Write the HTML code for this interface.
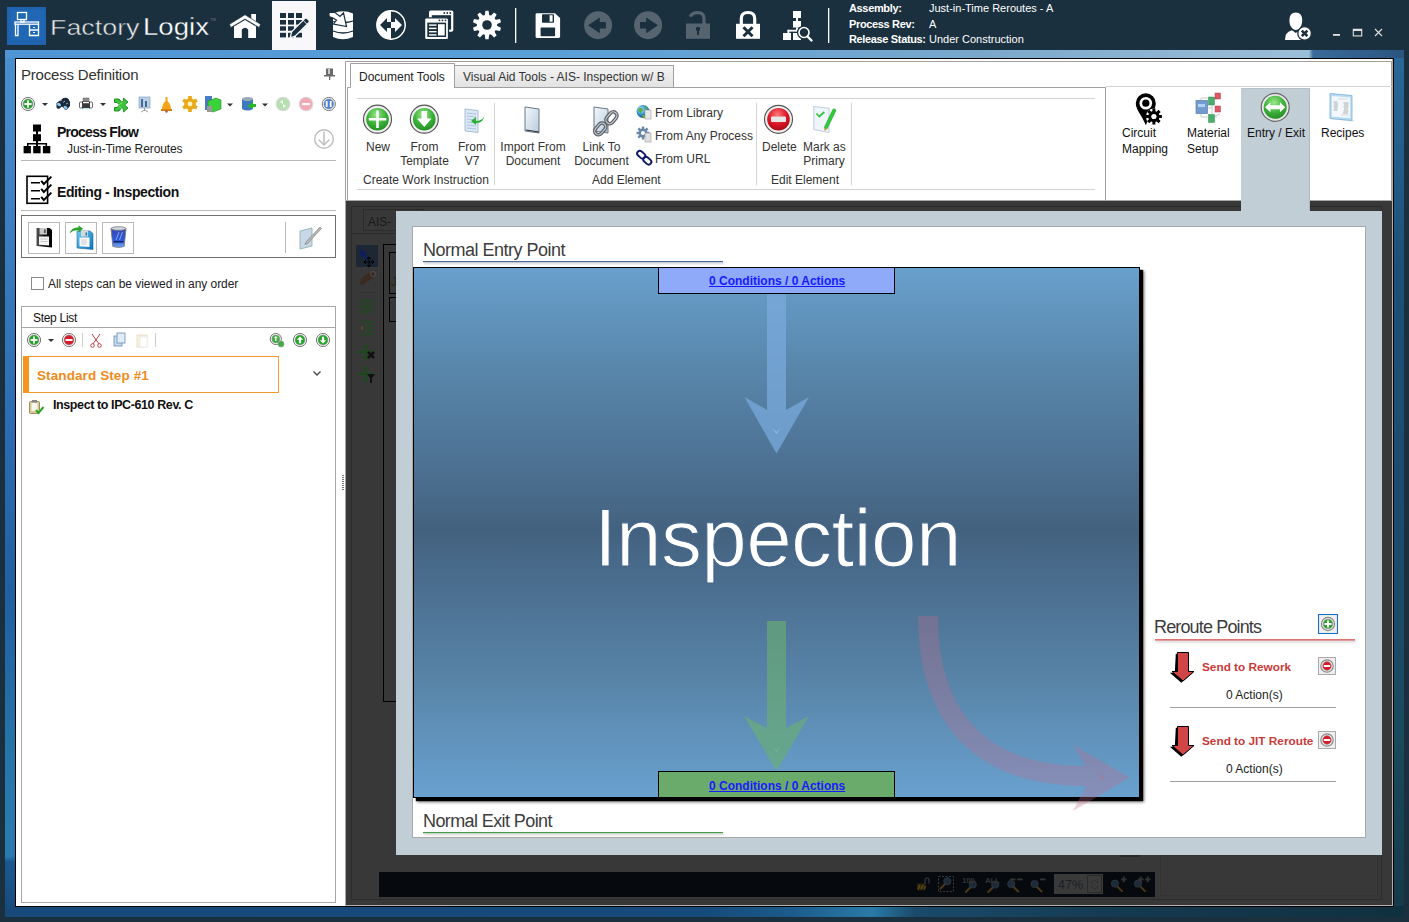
<!DOCTYPE html>
<html><head><meta charset="utf-8">
<style>
*{margin:0;padding:0;box-sizing:border-box}
html,body{width:1409px;height:922px;overflow:hidden;background:#1a303e;font-family:"Liberation Sans",sans-serif;position:relative}
.a{position:absolute}
.t{position:absolute;white-space:nowrap;line-height:1}
.rb{position:absolute;white-space:nowrap;font-size:12px;line-height:14px;color:#333}
svg{position:absolute;overflow:visible}
</style></head><body>
<!-- title bar -->
<div class="a" style="left:0;top:0;width:1409px;height:50px;background:#1a303e"></div>
<div class="a" style="left:272px;top:1px;width:44px;height:49px;background:#f8f8fb"></div>

<!-- TITLE SVG -->
<svg style="left:0;top:0" width="1409" height="50" viewBox="0 0 1409 50">
 <rect x="7" y="7" width="39" height="38" fill="#1f63ae"/>
 <rect x="11" y="10" width="33" height="30" fill="#2068b6"/>
 <g fill="none" stroke="#fff" stroke-width="1.3">
  <rect x="17.5" y="12.5" width="9" height="7"/>
  <path d="M21 19.5v2.5h3v-2.5"/>
  <rect x="15" y="22" width="23.5" height="2.2"/>
  <path d="M15.5 24.2v11.3h2.5v-11.3M29.5 24.2v11.3h9v-11.3M29.5 30h9"/>
 </g>
 <rect x="33" y="27" width="2" height="0.9" fill="#fff"/><rect x="33" y="32" width="2" height="0.9" fill="#fff"/>
 <text x="50" y="35" fill="#e8e8e8" stroke="#1a303e" stroke-width="0.45" font-family="Liberation Sans" font-size="22.5" textLength="89.5" lengthAdjust="spacingAndGlyphs">Factory</text>
 <text x="143" y="35" fill="#ffffff" stroke="#1a303e" stroke-width="0.3" font-family="Liberation Sans" font-size="23" textLength="66" lengthAdjust="spacingAndGlyphs">Logix</text>
 <text x="210" y="21" fill="#6a7a88" font-family="Liberation Sans" font-size="4">TM</text>

 <!-- home -->
 <g fill="#fff">
  <rect x="251.2" y="14" width="4.8" height="7"/>
  <path d="M229.6 24.2 L245 14.8 L260.4 24.2 L259.3 27.6 L245 19 L230.7 27.6Z" stroke="#1a303e" stroke-width="0.6"/>
  <path d="M234 26.5 L245 20 L256 26.5 V38 H248.2 V29.5 Q245 25.8 241.8 29.5 V38 H234Z"/>
 </g>
 <!-- grid pencil (on light tab) -->
 <g fill="#1a303e">
  <rect x="280" y="13" width="6" height="5"/><rect x="288" y="13" width="6" height="5"/><rect x="296" y="13" width="6" height="5"/>
  <rect x="280" y="20" width="6" height="4.6"/><rect x="288" y="20" width="6" height="4.6"/><rect x="296" y="20" width="6" height="4.6"/>
  <rect x="280" y="26.3" width="6" height="4.4"/><rect x="288" y="26.3" width="6" height="4.4"/><rect x="296" y="26.3" width="6" height="4.4"/>
  <rect x="280" y="32.8" width="6" height="4.6"/><rect x="288" y="32.8" width="6" height="4.6"/><rect x="296" y="32.8" width="6" height="4.6"/>
 </g>
 <path d="M290.2 37.8 L291.6 31.8 L305 18.4 Q306 17.4 307 18.4 L309 20.4 Q310 21.4 309 22.4 L295.6 35.8Z" fill="#1a303e" stroke="#f8f8fa" stroke-width="1.3"/>
 <path d="M303.3 20.6 L307 24.2" stroke="#f8f8fa" stroke-width="0.9"/>
 <!-- db arrow -->
 <path d="M333 13.5 Q343 9 353 13.5 V37 Q343 41.5 333 37 Z" fill="#fff"/>
 <path d="M333 31 Q343 35 353 31" fill="none" stroke="#1a303e" stroke-width="1.3"/>
 <path d="M345.5 22.5 Q350 22 353 21" fill="none" stroke="#1a303e" stroke-width="1.3"/>
 <path d="M333 21.5 Q338 23 346 23.5" fill="none" stroke="#1a303e" stroke-width="1.3"/>
 <path d="M329 12.5 H335 L340 16.5 L343.5 12.8 L346.5 26.5 L333.5 24 L336.5 20.2 L333 18 L329 16.5Z" fill="#fff" stroke="#1a303e" stroke-width="1.2"/>
 <!-- circle arrows -->
 <circle cx="391" cy="25" r="14" fill="#fff" stroke="#fff" stroke-width="1"/>
 <path d="M391 11 A14 14 0 0 1 391 39Z" fill="#1a303e"/>
 <circle cx="391" cy="25" r="14.2" fill="none" stroke="#fff" stroke-width="1.4"/>
 <path d="M380 25 L387 18 V22 H391 V28 H387 V32Z" fill="#1a303e"/>
 <path d="M402 25 L395 18 V22 H391 V28 H395 V32Z" fill="#fff"/>
 <!-- windows -->
 <rect x="429" y="10.4" width="24.3" height="21.4" rx="1.8" fill="#fff"/>
 <rect x="431.8" y="15.2" width="19.3" height="14.4" fill="#1a303e"/>
 <rect x="424.6" y="17.8" width="23.9" height="21.7" rx="1.8" fill="#fff" stroke="#1a303e" stroke-width="1.2"/>
 <rect x="427.3" y="22.6" width="18.8" height="14.4" fill="#1a303e"/>
 <g fill="#1a303e"><circle cx="444.3" cy="13" r="0.9"/><circle cx="447.3" cy="13" r="0.9"/><circle cx="450.3" cy="13" r="0.9"/>
  <circle cx="439.5" cy="20.3" r="0.9"/><circle cx="442.5" cy="20.3" r="0.9"/><circle cx="445.5" cy="20.3" r="0.9"/></g>
 <g fill="#fff"><rect x="429" y="24.4" width="7.5" height="1.4"/><rect x="429" y="27.7" width="7.5" height="1.4"/><rect x="429" y="31" width="7.5" height="1.4"/><rect x="429" y="34.2" width="7.5" height="1.4"/>
  <rect x="438" y="24.2" width="6.7" height="11.3"/></g>
 <!-- gear -->
 <g transform="translate(487,25)" fill="#fff">
  <circle r="10.2"/><path d="M-2.3 -9 L-1.6 -14.2 H1.6 L2.3 -9Z" transform="rotate(0)"/><path d="M-2.3 -9 L-1.6 -14.2 H1.6 L2.3 -9Z" transform="rotate(36)"/><path d="M-2.3 -9 L-1.6 -14.2 H1.6 L2.3 -9Z" transform="rotate(72)"/><path d="M-2.3 -9 L-1.6 -14.2 H1.6 L2.3 -9Z" transform="rotate(108)"/><path d="M-2.3 -9 L-1.6 -14.2 H1.6 L2.3 -9Z" transform="rotate(144)"/><path d="M-2.3 -9 L-1.6 -14.2 H1.6 L2.3 -9Z" transform="rotate(180)"/><path d="M-2.3 -9 L-1.6 -14.2 H1.6 L2.3 -9Z" transform="rotate(216)"/><path d="M-2.3 -9 L-1.6 -14.2 H1.6 L2.3 -9Z" transform="rotate(252)"/><path d="M-2.3 -9 L-1.6 -14.2 H1.6 L2.3 -9Z" transform="rotate(288)"/><path d="M-2.3 -9 L-1.6 -14.2 H1.6 L2.3 -9Z" transform="rotate(324)"/>
  <circle r="4.8" fill="#1a303e"/>
 </g>
 <rect x="515" y="8" width="1.3" height="35" fill="#fff"/>
 <!-- save -->
 <path d="M535.6 14.5 Q535.6 13.2 537 13.2 H555 L560.1 18 V36.6 Q560.1 38 558.7 38 H537 Q535.6 38 535.6 36.6Z" fill="#fff"/>
 <rect x="542" y="14.2" width="12" height="8.5" rx="0.8" fill="#1a303e"/>
 <rect x="549.6" y="15.2" width="3" height="6.5" fill="#fff"/>
 <rect x="540.6" y="27.4" width="14.5" height="8.8" rx="0.8" fill="#1a303e"/>
 <!-- back / forward -->
 <circle cx="598.1" cy="25.2" r="14" fill="#566470"/>
 <path d="M588.1 25.2 L599.8 17.4 V22 H605.9 V28.4 H599.8 V33.2Z" fill="#1a303e"/>
 <circle cx="648.1" cy="25.2" r="14" fill="#566470"/>
 <path d="M658 25.2 L646.2 17.4 V22 H640 V28.4 H646.2 V33.2Z" fill="#1a303e"/>
 <!-- unlock -->
 <path d="M690.2 16.6 Q692 12.6 698 12.6 Q704 12.6 704 18.5 V24" fill="none" stroke="#566470" stroke-width="3.2"/>
 <rect x="686" y="23.5" width="24" height="15.3" fill="#566470"/>
 <circle cx="698" cy="29" r="2.2" fill="#1a303e"/><rect x="697" y="29" width="2" height="6" fill="#1a303e"/>
 <!-- lock x -->
 <path d="M741.3 24 V18.5 Q741.3 12.5 748 12.5 Q754.7 12.5 754.7 18.5 V24" fill="none" stroke="#fff" stroke-width="3.2"/>
 <rect x="736" y="23.8" width="24" height="15" fill="#fff"/>
 <path d="M743.5 27.3 L752.5 36.3 M752.5 27.3 L743.5 36.3" stroke="#1a303e" stroke-width="3"/>
 <!-- hierarchy search -->
 <g fill="#fff">
  <rect x="793" y="11" width="8" height="7"/>
  <rect x="796" y="18" width="2" height="3"/>
  <rect x="793" y="21" width="8" height="6.5"/>
  <rect x="796" y="27.5" width="2" height="3"/>
  <rect x="787.5" y="29.8" width="9.5" height="1.8"/>
  <rect x="787.5" y="29.8" width="1.8" height="4"/>
  <rect x="783" y="33" width="8" height="7"/>
  <rect x="793" y="33" width="8" height="7"/>
 </g>
 <circle cx="804" cy="32.5" r="5.6" fill="#1a303e" stroke="#1a303e" stroke-width="3"/>
 <circle cx="804" cy="32.5" r="5" fill="#1a303e" stroke="#fff" stroke-width="1.6"/>
 <path d="M807.5 36.5 L811.5 40.5" stroke="#fff" stroke-width="2.4" stroke-linecap="round"/>
 <rect x="828" y="8" width="1.3" height="35" fill="#fff"/>

 <!-- header text -->
 <g font-family="Liberation Sans" font-size="11" fill="#fff">
  <text x="849" y="12" font-weight="700" letter-spacing="-0.35">Assembly:</text>
  <text x="849" y="28" font-weight="700" letter-spacing="-0.35">Process Rev:</text>
  <text x="849" y="43" font-weight="700" letter-spacing="-0.35">Release Status:</text>
  <text x="929" y="12">Just-in-Time Reroutes - A</text>
  <text x="929" y="28">A</text>
  <text x="929" y="43">Under Construction</text>
 </g>
 <!-- user x -->
 <g fill="#fff">
  <path d="M1295.8 12.6 C1300 12.6 1302.2 15.5 1302.2 20.5 C1302.2 26 1299 30 1295.8 30 C1292.6 30 1289.4 26 1289.4 20.5 C1289.4 15.5 1291.6 12.6 1295.8 12.6Z"/>
  <path d="M1285 40 Q1285 32 1292 30.3 L1295.8 33 L1299.5 30.3 Q1305 31 1307 36 L1307 40Z"/>
 </g>
 <circle cx="1304.6" cy="33.4" r="6.8" fill="#fff" stroke="#1a303e" stroke-width="1.3"/>
 <path d="M1301.8 30.6 L1307.4 36.2 M1307.4 30.6 L1301.8 36.2" stroke="#1a303e" stroke-width="2.6"/>
 <!-- window controls -->
 <rect x="1333" y="34" width="7" height="1.8" fill="#e0e0e0"/>
 <rect x="1353.3" y="29.3" width="8.4" height="6.6" fill="none" stroke="#e0e0e0" stroke-width="1.1"/>
 <rect x="1353" y="29" width="9" height="2" fill="#e0e0e0"/>
 <path d="M1375 29 L1382 36 M1382 29 L1375 36" stroke="#e0e0e0" stroke-width="1.1"/>
</svg>

<!-- window frame -->
<div class="a" style="left:5px;top:50px;width:1399px;height:867px;background:linear-gradient(180deg,#4a90d0 0%,#3a7cc0 23%,#2a6ab0 46%,#2060a0 63%,#2674aa 81%,#2a7ab2 93%,#1a5890 93.6%,#17497a 100%)"></div>
<div class="a" style="left:5px;top:50px;width:1399px;height:8px;background:linear-gradient(90deg,#4f94d4 0%,#5aa0d8 40%,#7aa8cc 70%,#9cbfd8 93.2%,#3a6a9a 93.5%,#2a5580 100%)"></div>
<div class="a" style="left:5px;top:906px;width:1399px;height:11px;background:linear-gradient(90deg,#17497a 0%,#164a7a 50%,#1b5a8a 56%,#2a7aa8 62%,#1a4a6a 65%,#143a50 80%,#10303f 100%)"></div>
<div class="a" style="left:1393px;top:58px;width:11px;height:848px;background:linear-gradient(180deg,#2a6898 0%,#1d5078 25%,#1c4c70 50%,#1c4a66 70%,#1a4a5c 80%,#163a4a 100%)"></div>

<!-- black outline of content -->
<div class="a" style="left:15px;top:58px;width:1379px;height:849px;background:#000"></div>

<!-- left panel -->
<div class="a" id="left" style="left:16px;top:59px;width:330px;height:847px;background:#fff"></div>


<!-- LEFT PANEL CONTENT -->
<div class="t" style="left:21px;top:67px;font-size:15px;color:#333;letter-spacing:-0.2px">Process Definition</div>
<svg style="left:0;top:0" width="346" height="440" viewBox="0 0 346 440">
 <defs>
  <radialGradient id="gG" cx="0.4" cy="0.35" r="0.7"><stop offset="0" stop-color="#8fe07a"/><stop offset="0.6" stop-color="#2fa52a"/><stop offset="1" stop-color="#1d7d1a"/></radialGradient>
  <radialGradient id="gR" cx="0.4" cy="0.35" r="0.7"><stop offset="0" stop-color="#ff8a8a"/><stop offset="0.6" stop-color="#d81b2a"/><stop offset="1" stop-color="#9a0d18"/></radialGradient>
  <radialGradient id="gB" cx="0.4" cy="0.35" r="0.7"><stop offset="0" stop-color="#a8c4ff"/><stop offset="0.6" stop-color="#4a7fe0"/><stop offset="1" stop-color="#2a55b0"/></radialGradient>
 </defs>
 <!-- pin -->
 <g fill="#6a6a6a"><rect x="326" y="68.5" width="7" height="6.5"/><rect x="324" y="75" width="11" height="1.5"/><rect x="329" y="76" width="1.3" height="4"/></g>
 <rect x="328" y="69" width="2" height="5" fill="#c8c8c8"/>
 <!-- toolbar -->
 <circle cx="28" cy="104" r="6.6" fill="#f4f4f4" stroke="#7a7a7a" stroke-width="1"/>
 <circle cx="28" cy="104" r="4.9" fill="#22a628" stroke="#888" stroke-width="0.5"/>
 <path d="M28 100.3v7.4M24.3 104h7.4" stroke="#f4f0f4" stroke-width="1.9"/>
 <path d="M42 103h6l-3 3z" fill="#333"/>
 <g><path d="M56.5 103 l7-5 q3-1 5 1 l1.5 3 v4 l-3 3.5 q-2 1-3 -1 l-2-2 -2.5 2 q-2 1-3 -1z" fill="#1a2a38"/>
  <ellipse cx="59" cy="104.5" rx="2.2" ry="1.5" fill="#8ac8f0" transform="rotate(35 59 104.5)"/>
  <ellipse cx="65.5" cy="107.5" rx="2.2" ry="1.5" fill="#8ac8f0" transform="rotate(35 65.5 107.5)"/>
  <path d="M60 101 l2-1 M63 102.5 l2-1.5 M66 104 l2-1" stroke="#d0d8e0" stroke-width="0.7"/></g>
 <g><rect x="79.5" y="102" width="13" height="6" rx="1" fill="#fff" stroke="#444" stroke-width="0.8"/><rect x="83" y="98" width="6" height="4.5" fill="#8a8a8a" stroke="#666" stroke-width="0.5"/><rect x="82.5" y="102" width="7" height="6.5" fill="#3a3a3a" stroke="#000" stroke-width="0.6"/><rect x="82.5" y="108" width="7" height="1.5" fill="#c0ecf4"/><rect x="83" y="102" width="6" height="1.2" fill="#fff"/></g>
 <path d="M100 103h6l-3 3z" fill="#333"/>
 <path d="M114.5 99 h4.5 l3 3.5 l1.5 -2 v-2.5 l4.5 4 -3.5 3 3.5 3 -4.5 4 v-2.5 l-1.5-2 -3 3.5 h-4.5 v-3.5 h2.5 l2.5-2.5 -2.5-2.5 h-2.5z" fill="#3cc43c" stroke="#168a16" stroke-width="0.9"/>
 <path d="M119 105 l3.5-3 M119 106 l3.5 3" stroke="#8ae88a" stroke-width="0.8"/>
 <g><rect x="139" y="97" width="11" height="11" fill="#b8d0e8" stroke="#7a9ab8" stroke-width="0.6"/><rect x="141" y="99" width="2" height="8" fill="#4a6a90"/><rect x="145" y="101" width="2" height="6" fill="#4a6a90"/><path d="M144.5 108 v3 M141 112 l3.5-2 3.5 2" stroke="#888" stroke-width="0.8" fill="none"/></g>
 <g><path d="M162 110 Q162 104 165.5 101 L165.5 97 h2 v4 Q171 104 171 110z" fill="#f5a318"/><rect x="161" y="109" width="11" height="2" fill="#d9820a"/><circle cx="166.5" cy="111.5" r="1.2" fill="#a55"/></g>
 <g transform="translate(190,104)"><circle r="6" fill="#f0b82a"/><g fill="#e8a818"><rect x="-1.8" y="-8" width="3.6" height="16" transform="rotate(0)"/><rect x="-1.8" y="-8" width="3.6" height="16" transform="rotate(60)"/><rect x="-1.8" y="-8" width="3.6" height="16" transform="rotate(120)"/></g><circle r="2.4" fill="#fff3c0"/></g>
 <g><rect x="205" y="96" width="7" height="14" fill="#4a7ac8"/><path d="M208 101 l8-3 5 2 v9 l-8 3 -5-2z" fill="#3ad23a" stroke="#2a8a2a" stroke-width="0.6"/><rect x="207" y="106" width="5" height="6" fill="#999"/></g>
 <path d="M227 103.5h6l-3 3z" fill="#333"/>
 <g><path d="M242 99 q5.5-3 11 0 v10 q-5.5 3-11 0z" fill="#3d78c0"/><ellipse cx="247.5" cy="99" rx="5.5" ry="2" fill="#9ab"/><path d="M247 106 l6-4 v2 h3 v3 h-3 v2z" fill="#2ab52a"/></g>
 <path d="M262 103.5h6l-3 3z" fill="#333"/>
 <circle cx="283" cy="104" r="6.8" fill="#b5e0b0" stroke="#d8d8d8" stroke-width="1.1"/><path d="M280 102 l3-2 v4z M286 106 l-3 2 v-4z" fill="#fff"/>
 <circle cx="306" cy="104" r="6.8" fill="#f4a8b5" stroke="#d8d8d8" stroke-width="1.1"/><rect x="302" y="103" width="8" height="2.2" fill="#fff"/>
 <circle cx="328.8" cy="104" r="6.6" fill="#f4f4f4" stroke="#7a7a7a" stroke-width="1"/><circle cx="328.8" cy="104" r="4.9" fill="#4a7fe0" stroke="#8a8a8a" stroke-width="0.5"/><rect x="325.8" y="101" width="1.8" height="6" fill="#fff"/><rect x="329.8" y="101" width="1.8" height="6" fill="#fff"/>
 <!-- process flow icon -->
 <g fill="#000"><rect x="33" y="124.5" width="8" height="7"/><rect x="36" y="131" width="2" height="3.5"/><rect x="33" y="134.2" width="8" height="7"/><rect x="36" y="141" width="2" height="2.5"/><rect x="27" y="143" width="20" height="1.5"/><rect x="27" y="143" width="1.5" height="3.5"/><rect x="45.6" y="143" width="1.5" height="3.5"/><rect x="23.6" y="146" width="7.3" height="7.3"/><rect x="33.2" y="146" width="7.4" height="7.3"/><rect x="42.9" y="146" width="7.4" height="7.3"/><rect x="36" y="143" width="2" height="3"/></g>
 <circle cx="324" cy="139" r="9.3" fill="none" stroke="#c0c0c0" stroke-width="1.5"/>
 <path d="M324 131.5 v13 M318.5 139.5 l5.5 5.5 5.5-5.5" fill="none" stroke="#c0c0c0" stroke-width="1.5"/>
 <rect x="21" y="160" width="315" height="1" fill="#b8b8b8"/>
 <!-- editing icon -->
 <rect x="27" y="176.3" width="20.6" height="27" fill="#fff" stroke="#000" stroke-width="1.6"/>
 <g fill="none" stroke="#000"><path d="M31 182.7 h9 M31 190.7 h9 M31 198.7 h9" stroke-width="1.5"/>
 <path d="M41.2 180.8 l2.6 3.2 7.6-7.4 M41.2 188.8 l2.6 3.2 7.6-7.4 M41.2 196.8 l2.6 3.2 7.6-7.4" stroke-width="2"/></g>
 <rect x="21" y="210" width="315" height="1" fill="#b8b8b8"/>
 <!-- button box -->
 <rect x="21.5" y="215.5" width="314" height="42" fill="#fff" stroke="#707070" stroke-width="1"/>
 <rect x="28.5" y="222.5" width="31" height="31" fill="#fff" stroke="#b8b8b8"/>
 <rect x="65.5" y="222.5" width="31" height="31" fill="#fff" stroke="#b8b8b8"/>
 <rect x="102.5" y="222.5" width="31" height="31" fill="#fff" stroke="#b8b8b8"/>
 <rect x="285" y="222" width="1" height="31" fill="#b8b8b8"/>
 <!-- floppy black -->
 <defs><linearGradient id="fb" x1="0" y1="0" x2="1" y2="0"><stop offset="0" stop-color="#555"/><stop offset="0.5" stop-color="#111"/><stop offset="1" stop-color="#000"/></linearGradient>
 <linearGradient id="fbl" x1="0" y1="0" x2="1" y2="1"><stop offset="0" stop-color="#6ad0f8"/><stop offset="1" stop-color="#0a70b8"/></linearGradient>
 <linearGradient id="tr" x1="0" y1="0" x2="0" y2="1"><stop offset="0" stop-color="#3a4ab0"/><stop offset="0.6" stop-color="#2a58d8"/><stop offset="1" stop-color="#7aaaf0"/></linearGradient></defs>
 <path d="M36.5 228 h13 l2.5 2 v17.5 l-15.5-1.5z" fill="url(#fb)"/>
 <rect x="39.5" y="228" width="7.5" height="6.5" fill="#c8c8c8"/><rect x="44" y="229.5" width="1.8" height="3.5" fill="#555"/>
 <path d="M39 236.5 h10 v9 l-10-0.8z" fill="#f4f4f4"/>
 <path d="M40.5 239 h7 M40.5 241.5 h7" stroke="#aaa" stroke-width="0.6"/>
 <!-- floppy blue w/ arrow -->
 <path d="M77 231 h13 l3 2.5 v16 l-16-1.5z" fill="url(#fbl)" stroke="#1a6aa0" stroke-width="0.6"/>
 <rect x="81" y="231" width="7" height="5.5" fill="#d8d8d8"/><rect x="85.5" y="232.5" width="1.6" height="3" fill="#1a7ac0"/>
 <path d="M79.5 237.5 h10 v9.5 l-10-0.8z" fill="#fafafa"/>
 <path d="M81 240 h6 M81 242 h6 M81 244 h5" stroke="#999" stroke-width="0.5"/>
 <path d="M69.5 233.5 q2-6.5 9-6 v-2.3 l4.5 3.6 -4.5 3.6 v-2.2 q-5.5-0.5-9 3.3z" fill="#2aa52a"/>
 <!-- trash -->
 <path d="M111 228.5 h15 l-1.8 18 q-5.7 2 -11.4 0z" fill="url(#tr)" stroke="#777" stroke-width="0.8"/>
 <ellipse cx="118.5" cy="228.5" rx="7.5" ry="1.8" fill="#d0d8e0" stroke="#777" stroke-width="0.8"/>
 <path d="M116 240 l3-8 M119.5 240 l3-8" stroke="#9ab8f0" stroke-width="0.8"/>
 <rect x="113.5" y="241" width="10" height="1.5" fill="#102060"/>
 <!-- edit icon -->
 <path d="M300 231 l12-3 v18 l-12 3z" fill="#c8d8e8" stroke="#8aa" stroke-width="0.8"/>
 <path d="M306 242 l14-15 1.5 1.5 -14 15 -2.5 1z" fill="#b8b8b8" stroke="#777" stroke-width="0.6"/>
 <!-- checkbox -->
 <rect x="31.5" y="277.5" width="12" height="12" fill="#fff" stroke="#8a8a8a" stroke-width="1"/>
 <!-- step list box -->
 <rect x="21.5" y="306.5" width="314" height="596" fill="none" stroke="#a8a8a8" stroke-width="1"/>
 <rect x="22" y="327" width="313" height="1" fill="#a8a8a8"/>
 <!-- step toolbar -->
 <circle cx="34" cy="340" r="6.6" fill="#f4f4f4" stroke="#7a7a7a" stroke-width="1"/><circle cx="34" cy="340" r="4.9" fill="#22a628" stroke="#8a8a8a" stroke-width="0.5"/><path d="M34 336.5v7M30.5 340h7" stroke="#f4f0f4" stroke-width="1.9"/>
 <path d="M48 339h6l-3 3z" fill="#333"/>
 <circle cx="69" cy="340" r="6.6" fill="#f4f4f4" stroke="#7a7a7a" stroke-width="1"/><circle cx="69" cy="340" r="4.9" fill="#d81b2a" stroke="#8a8a8a" stroke-width="0.5"/><rect x="65.5" y="339" width="7" height="2" fill="#f4f4f4"/>
 <rect x="82" y="333" width="1" height="14" fill="#ccc"/>
 <g stroke="#c04040" stroke-width="1" fill="none"><path d="M92 334 l7 10 M100 334 l-7 10"/><circle cx="92.5" cy="345.5" r="1.8"/><circle cx="99.5" cy="345.5" r="1.8"/></g>
 <g><rect x="114" y="336" width="8" height="10" fill="#c8dcf0" stroke="#6a8ab0" stroke-width="0.8"/><rect x="117" y="333" width="8" height="10" fill="#e0ecf8" stroke="#6a8ab0" stroke-width="0.8"/></g>
 <g opacity="0.45"><rect x="137" y="335" width="10" height="12" fill="#f0e0b0" stroke="#c8b080" stroke-width="0.8"/><rect x="140" y="337" width="7" height="10" fill="#fff" stroke="#ccc" stroke-width="0.6"/></g>
 <rect x="155" y="333" width="1" height="14" fill="#ccc"/>
 <circle cx="275.8" cy="339" r="5.6" fill="#f4f4f4" stroke="#7a7a7a" stroke-width="1"/><circle cx="275.8" cy="339" r="3.9" fill="#3ab040" stroke="#8a8a8a" stroke-width="0.5"/><path d="M275.8 336 l-2 2 h1.3 v3 h1.4 v-3 h1.3z" fill="#fff"/><circle cx="281" cy="344" r="3" fill="#3ab040" stroke="#999" stroke-width="0.8"/>
 <circle cx="300" cy="340" r="6.6" fill="#f4f4f4" stroke="#7a7a7a" stroke-width="1"/><circle cx="300" cy="340" r="4.9" fill="#22a628" stroke="#8a8a8a" stroke-width="0.5"/><path d="M300 336.5 l-3.2 3.3 h2.1 v3.5 h2.2 v-3.5 h2.1z" fill="#fff"/>
 <circle cx="323" cy="340" r="6.6" fill="#f4f4f4" stroke="#7a7a7a" stroke-width="1"/><circle cx="323" cy="340" r="4.9" fill="#22a628" stroke="#8a8a8a" stroke-width="0.5"/><path d="M323 343.5 l-3.2 -3.3 h2.1 v-3.5 h2.2 v3.5 h2.1z" fill="#fff"/>
 <!-- standard step -->
 <rect x="23.5" y="356.5" width="255" height="36" fill="#fff" stroke="#f39a2a" stroke-width="1"/>
 <rect x="23" y="356" width="6" height="37" fill="#f7941d"/>
 <path d="M313.5 371.5 l3.5 3.5 3.5-3.5" fill="none" stroke="#444" stroke-width="1.3"/>
 <!-- inspect icon -->
 <rect x="29.5" y="401.5" width="10" height="12" rx="1" fill="#d8c890" stroke="#8a7a4a" stroke-width="0.8"/>
 <rect x="31.5" y="403" width="6" height="8" fill="#f8f8f0"/>
 <rect x="32" y="400" width="5" height="2.5" fill="#888"/>
 <path d="M36 410 l2.5 3 5-6" fill="none" stroke="#2aa52a" stroke-width="2"/>
</svg>
<div class="t" style="left:57px;top:124.5px;font-size:14px;font-weight:700;color:#111;letter-spacing:-0.75px">Process Flow</div>
<div class="t" style="left:67px;top:143px;font-size:12px;color:#1e1e1e;letter-spacing:-0.1px">Just-in-Time Reroutes</div>
<div class="t" style="left:57px;top:184.5px;font-size:14px;font-weight:700;color:#111;letter-spacing:-0.4px">Editing - Inspection</div>
<div class="t" style="left:48px;top:278px;font-size:12px;color:#222;letter-spacing:-0.05px">All steps can be viewed in any order</div>
<div class="t" style="left:33px;top:312px;font-size:12px;color:#111;letter-spacing:-0.3px">Step List</div>
<div class="t" style="left:37px;top:369px;font-size:13.5px;font-weight:700;color:#f08a1a;letter-spacing:0.1px">Standard Step #1</div>
<div class="t" style="left:53px;top:399px;font-size:12.5px;font-weight:700;color:#111;letter-spacing:-0.4px">Inspect to IPC-610 Rev. C</div>
<div class="a" style="left:342px;top:475px;width:2px;height:15px;background:repeating-linear-gradient(180deg,#777 0 1px,transparent 1px 2px)"></div>

<!-- right area -->
<div class="a" id="right" style="left:346px;top:59px;width:1047px;height:847px;background:#fff"></div>



<!-- CANVAS -->
<div class="a" style="left:346px;top:201px;width:1046px;height:704px;background:#383838"></div>
<div class="a" style="left:345px;top:200px;width:1047px;height:1px;background:#a8a8a8"></div>
<div class="a" style="left:345px;top:200px;width:1px;height:706px;background:#a8a8a8"></div>
<div class="a" style="left:346px;top:905px;width:1047px;height:1px;background:#b0b0b0"></div>
<div class="a" style="left:1392px;top:59px;width:1px;height:847px;background:#b0b0b0"></div>
<svg style="left:0;top:0" width="1409" height="922" viewBox="0 0 1409 922">
 <rect x="351.5" y="206.5" width="1030" height="693" fill="none" stroke="#2c2c2c"/>
 <rect x="363.5" y="209.5" width="60" height="21" fill="none" stroke="#2c2c2c"/>
 <rect x="352" y="233" width="50" height="1" fill="#2c2c2c"/>
 <text x="368" y="226" font-family="Liberation Sans" font-size="12" fill="#1a1a1a">AIS- I</text>
 <!-- tool column -->
 <rect x="356" y="245" width="22" height="22" fill="#1d2733"/>
 <path d="M360 249 l7 3 -2 2 4 4 -2 2 -4-4 -2 2z" fill="#0d1f5a"/>
 <path d="M369 257 v10 M364 262 h10 M367 259 l2-2 2 2 M367 265 l2 2 2-2 M366 260 l-2 2 2 2 M372 260 l2 2-2 2" fill="none" stroke="#000" stroke-width="1"/>
 <path d="M360 284 q0-6 6-9 l6-3 q3 0 3 3 l-4 4 q-4 3-8 6z" fill="#3a2a20"/>
 <circle cx="373" cy="274" r="2.5" fill="none" stroke="#555" stroke-width="0.8"/>
 <rect x="360" y="292" width="15" height="1" fill="#333"/>
 <g fill="none" stroke="#1f4a1f" stroke-width="1.2"><rect x="360.5" y="300.5" width="11.5" height="11.5"/><path d="M366.3 300.5 v11.5 M360.5 306.3 h11.5"/></g>
 <g stroke="#1f4a1f" stroke-width="1.3"><path d="M361 322h13 M365 326h9 M365 330h9 M361 334h13"/></g>
 <path d="M360 328 l3-2 v4z" fill="#6a4a10"/>
 <g fill="#1a4a1a"><path d="M366 344 l3 3 h-2 v4 h4 v-2 l3 3 -3 3 v-2 h-4 v4 h2 l-3 3 -3-3 h2 v-4 h-4 v2 l-3-3 3-3 v2 h4 v-4 h-2z"/></g>
 <path d="M368 352 l6 6 M374 352 l-6 6" stroke="#111" stroke-width="2.5"/>
 <g fill="#1a4a1a"><path d="M366 366 l3 3 h-2 v4 h4 v-2 l3 3 -3 3 v-2 h-4 v4 h2 l-3 3 -3-3 h2 v-4 h-4 v2 l-3-3 3-3 v2 h4 v-4 h-2z"/></g>
 <path d="M367 374 h8 l-3 4 v5 h-2 v-5z" fill="#111"/>
 <!-- underlying rects -->
 <rect x="383.5" y="244.5" width="20" height="457" fill="none" stroke="#000" stroke-width="1"/>
 <rect x="389.5" y="252.5" width="20" height="41" fill="none" stroke="#000" stroke-width="1"/>
 <rect x="389.5" y="297.5" width="20" height="24" fill="none" stroke="#000" stroke-width="1"/>
 <text x="391" y="286" font-family="Liberation Sans" font-size="12" fill="#2a2418">J</text>
 <!-- bottom toolbar -->
 <rect x="379" y="872" width="776" height="25" fill="#060a0e"/>
 <rect x="1160.5" y="855.5" width="217" height="40" fill="none" stroke="#333"/>
 <rect x="1120" y="855" width="20" height="2" fill="#2a2a2a"/>
 <rect x="1054" y="874" width="49" height="20" fill="#3a3a3a"/>
 <rect x="1087.5" y="875.5" width="14" height="17" fill="none" stroke="#2a2a2a"/>
 <path d="M1091 883 l3.5-3.5 3.5 3.5 M1091 886 l3.5 3.5 3.5-3.5" fill="none" stroke="#2a2a2a" stroke-width="1"/>
 <text x="1058" y="889" font-family="Liberation Sans" font-size="12.5" fill="#1a1f26">47%</text>
 <g><rect x="917" y="883.4" width="8.5" height="7" fill="#2a2410"/><path d="M918 889 l2-4 M921 889 l2-4 M924 889 l1.5-3" stroke="#6a5010" stroke-width="1.2"/><path d="M925 884 v-3.5 q0-2.5 2-2.5 q2 0 2 2.5 v3" fill="none" stroke="#3a3a3a" stroke-width="1.1"/></g>
 <rect x="938.5" y="876.5" width="15" height="15" fill="none" stroke="#3a3a3a" stroke-dasharray="2 1.5"/>
 <path d="M944.8 884.3 L940.3 888.8" stroke="#4a3818" stroke-width="2" stroke-linecap="round"/><circle cx="947.3" cy="881.3" r="3.6" fill="#1e2a36" stroke="#2e3a46" stroke-width="0.8"/><path d="M970.3 887.5 L965.8 892.0" stroke="#4a3818" stroke-width="2" stroke-linecap="round"/><circle cx="972.8" cy="884.5" r="3.6" fill="#1e2a36" stroke="#2e3a46" stroke-width="0.8"/><path d="M992.7 887.5 L988.2 892.0" stroke="#4a3818" stroke-width="2" stroke-linecap="round"/><circle cx="995.2" cy="884.5" r="3.6" fill="#1e2a36" stroke="#2e3a46" stroke-width="0.8"/><path d="M1013.7 887 L1018.2 891.5" stroke="#4a3818" stroke-width="2" stroke-linecap="round"/><circle cx="1011.2" cy="884" r="3.6" fill="#1e2a36" stroke="#2e3a46" stroke-width="0.8"/><path d="M1037.1 887 L1041.6 891.5" stroke="#4a3818" stroke-width="2" stroke-linecap="round"/><circle cx="1034.6" cy="884" r="3.6" fill="#1e2a36" stroke="#2e3a46" stroke-width="0.8"/><path d="M1117.5 886.6 L1122.0 891.1" stroke="#4a3818" stroke-width="2" stroke-linecap="round"/><circle cx="1115" cy="883.6" r="3.6" fill="#1e2a36" stroke="#2e3a46" stroke-width="0.8"/><path d="M1140.5 886.6 L1145.0 891.1" stroke="#4a3818" stroke-width="2" stroke-linecap="round"/><circle cx="1138" cy="883.6" r="3.6" fill="#1e2a36" stroke="#2e3a46" stroke-width="0.8"/>
 <text x="962" y="882.5" font-family="Liberation Sans" font-size="8" font-weight="700" fill="#333" letter-spacing="-0.3">100</text>
 <text x="985" y="882.5" font-family="Liberation Sans" font-size="8" font-weight="700" fill="#333" letter-spacing="-0.3">ALL</text>
 <g fill="#333"><rect x="1010" y="878.5" width="5.5" height="1.8"/><rect x="1017" y="878.5" width="5.5" height="1.8"/><rect x="1040" y="878.5" width="5.5" height="1.8"/>
  <rect x="1121" y="878.5" width="5.5" height="1.8"/><rect x="1122.9" y="876.6" width="1.8" height="5.6"/>
  <rect x="1138" y="878.5" width="5.5" height="1.8"/><rect x="1139.9" y="876.6" width="1.8" height="5.6"/><rect x="1145" y="878.5" width="5.5" height="1.8"/><rect x="1146.9" y="876.6" width="1.8" height="5.6"/></g>
</svg>

<!-- DIALOG -->
<div class="a" style="left:396px;top:211px;width:986px;height:644px;background:#c2ced6"></div>
<div class="a" style="left:412px;top:226px;width:954px;height:612px;background:#fff;border:1px solid #a8a8a8"></div>
<div class="a" style="left:413px;top:267px;width:727px;height:531px;background:linear-gradient(180deg,#69a0cc 0%,#5886ab 19%,#4c7091 38%,#43627f 49.5%,#4a6d8e 59%,#5884a8 78%,#69a1cf 100%);border:1px solid #000;box-shadow:3px 3px 1px #000,4px 4px 3px rgba(0,0,0,0.6)"></div>
<svg style="left:0;top:0" width="1409" height="922" viewBox="0 0 1409 922">
 <defs><filter id="sh" x="-5%" y="-50%" width="110%" height="300%"><feGaussianBlur stdDeviation="1"/></filter></defs>
 <rect x="424" y="262" width="300" height="2" fill="#000" opacity="0.18" filter="url(#sh)"/>
 <rect x="423" y="261" width="300" height="1.2" fill="#4a6a9a"/>
 <rect x="424" y="833" width="300" height="2" fill="#000" opacity="0.18" filter="url(#sh)"/>
 <rect x="423" y="832" width="300" height="1.2" fill="#4a9a4a"/>
 <rect x="1156" y="640.5" width="200" height="2" fill="#000" opacity="0.18" filter="url(#sh)"/>
 <rect x="1155" y="639.2" width="200" height="1.3" fill="#d85050"/>
 <!-- entry tab -->
 <rect x="658.5" y="267.5" width="236" height="26" fill="#8eaaf8" stroke="#000"/>
 <!-- blue arrow -->
 <g fill="#7aaadc" opacity="0.75">
  <rect x="767" y="294" width="19" height="117"/>
  <path d="M744.5 397 L776.5 453.5 L809 397 L786 410 V411 H767 V410Z"/>
 </g>
 <path d="M772 428 l4.5 4 4.5-4 -4.5 6z" fill="#a8c8f0" opacity="0.6"/>
 <!-- green arrow -->
 <g fill="#6ab070" opacity="0.62">
  <rect x="767" y="621" width="19" height="107"/>
  <path d="M744 716 L776.5 771 L809 716 L786 728 H767Z"/>
 </g>
 <path d="M772 746 l4.5 4 4.5-4 -4.5 6z" fill="#80c090" opacity="0.5"/>
 <!-- exit tab -->
 <rect x="658.5" y="771.5" width="236" height="26" fill="#6aaa6b" stroke="#000"/>
 <rect x="659" y="797" width="235" height="1" fill="#000"/>
 <!-- red curved arrow -->
 <g opacity="0.3"><path d="M928 616 C928 712 975 776 1086 776" fill="none" stroke="#c86a8a" stroke-width="20"/><path d="M1073 745 L1130 777.5 L1073 811 L1086 786 V767Z" fill="#c86a8a"/></g>
 <path d="M1099 773 l6 4.5 -6 4.5 2-4.5z" fill="#e06070" opacity="0.25"/>
 <!-- reroute panel -->
 <rect x="1318.5" y="614.5" width="19" height="19" fill="#f2f0ec" stroke="#1a70d0" stroke-width="1.1"/>
 <circle cx="1328" cy="624" r="6.6" fill="#eee" stroke="#8a8a8a" stroke-width="1.2"/><circle cx="1328" cy="624" r="4.8" fill="#2aa030" stroke="#999" stroke-width="0.5"/>
 <path d="M1328 620.5v7M1324.5 624h7" stroke="#fff" stroke-width="1.9"/>
 <g id="rarrow">
  <path d="M1177 653 h12 v19 h5 l-11.5 10 -11.5-10 h5z" fill="#000" transform="translate(-1.2,0.8)"/>
  <path d="M1177.5 652.5 h11 v19 h5.5 l-11 9.5 -11-9.5 h5.5z" fill="#d04545" stroke="#000" stroke-width="1"/>
 </g>
 <use href="#rarrow" transform="translate(0,74)"/>
 <rect x="1318.5" y="657.5" width="17" height="17" fill="#eee" stroke="#aaa"/>
 <circle cx="1327" cy="666" r="6.2" fill="#eee" stroke="#8a8a8a" stroke-width="1.2"/><circle cx="1327" cy="666" r="4.4" fill="#d81b2a" stroke="#999" stroke-width="0.5"/><rect x="1323.8" y="665" width="6.4" height="2" fill="#fff"/>
 <rect x="1318.5" y="731.5" width="17" height="17" fill="#eee" stroke="#aaa"/>
 <circle cx="1327" cy="740" r="6.2" fill="#eee" stroke="#8a8a8a" stroke-width="1.2"/><circle cx="1327" cy="740" r="4.4" fill="#d81b2a" stroke="#999" stroke-width="0.5"/><rect x="1323.8" y="739" width="6.4" height="2" fill="#fff"/>
 <rect x="1170" y="707" width="166" height="1" fill="#a0a0a0"/>
 <rect x="1170" y="781" width="166" height="1" fill="#a0a0a0"/>
</svg>
<div class="t" style="left:423px;top:241px;font-size:18px;color:#3c3c3c;letter-spacing:-0.5px">Normal Entry Point</div>
<div class="t" style="left:423px;top:811.5px;font-size:18px;color:#3c3c3c;letter-spacing:-0.6px">Normal Exit Point</div>
<div class="t" style="left:1154px;top:617.5px;font-size:18px;color:#3c3c3c;letter-spacing:-0.85px">Reroute Points</div>
<div class="t" style="left:709px;top:275px;font-size:12px;font-weight:700;color:#1a1aff;text-decoration:underline">0 Conditions / 0 Actions</div>
<div class="t" style="left:709px;top:780px;font-size:12px;font-weight:700;color:#1a1aff;text-decoration:underline">0 Conditions / 0 Actions</div>
<div class="t" style="left:594px;top:497px;font-size:82px;color:#fff;letter-spacing:-0.7px;-webkit-text-stroke:1.2px #46668a">Inspection</div>
<div class="t" style="left:1202px;top:662px;font-size:11.8px;font-weight:700;color:#c83a3a">Send to Rework</div>
<div class="t" style="left:1202px;top:736px;font-size:11.8px;font-weight:700;color:#c83a3a">Send to JIT Reroute</div>
<div class="t" style="left:1226px;top:689px;font-size:12px;color:#222">0 Action(s)</div>
<div class="t" style="left:1226px;top:763px;font-size:12px;color:#222">0 Action(s)</div>

<!-- RIBBON -->
<svg style="left:0;top:0" width="1409" height="220" viewBox="0 0 1409 220">
 <defs>
  <radialGradient id="rG" cx="0.45" cy="0.3" r="0.75"><stop offset="0" stop-color="#9be88a"/><stop offset="0.55" stop-color="#3cb23a"/><stop offset="1" stop-color="#238a22"/></radialGradient>
  <radialGradient id="rR" cx="0.45" cy="0.3" r="0.75"><stop offset="0" stop-color="#ff7a7a"/><stop offset="0.55" stop-color="#dc1626"/><stop offset="1" stop-color="#a00a14"/></radialGradient>
  <linearGradient id="tab2" x1="0" y1="0" x2="0" y2="1"><stop offset="0" stop-color="#f4f4f4"/><stop offset="1" stop-color="#e2e2e2"/></linearGradient>
  <linearGradient id="doc" x1="0" y1="0" x2="1" y2="1"><stop offset="0" stop-color="#f4f8fc"/><stop offset="1" stop-color="#b8ccdc"/></linearGradient>
 </defs>
 <path d="M345.5 200 V61.5 H1391.5 V200" fill="none" stroke="#a0a0a0"/>
 <rect x="454.5" y="65.5" width="219" height="22" fill="url(#tab2)" stroke="#a0a0a0"/>
 <path d="M347.5 200 V87.5 H350.5 V63.5 H454.5 V87.5 H1105.5" fill="none" stroke="#a0a0a0"/>
 <rect x="1106" y="86" width="286" height="1" fill="#d4d4d4"/>
 <path d="M351 87 H454" stroke="#fff" stroke-width="1"/>
 <rect x="1105" y="87" width="1" height="114" fill="#a0a0a0"/>
 <rect x="357" y="98" width="738" height="1" fill="#d4d4d4"/>
 <rect x="357" y="189" width="738" height="1" fill="#d4d4d4"/>
 <rect x="494" y="103" width="1" height="82" fill="#d4d4d4"/>
 <rect x="756" y="103" width="1" height="82" fill="#d4d4d4"/>
 <rect x="851" y="103" width="1" height="82" fill="#d4d4d4"/>
 <!-- new -->
 <circle cx="377.5" cy="119.2" r="14" fill="#f0f0f0" stroke="#555" stroke-width="1.2"/>
 <circle cx="377.5" cy="119.2" r="11.3" fill="url(#rG)"/>
 <path d="M377.5 110.5v17.5M368.8 119.2h17.5" stroke="#fff" stroke-width="2.6"/>
 <!-- from template -->
 <circle cx="424.3" cy="119.2" r="14" fill="#f0f0f0" stroke="#555" stroke-width="1.2"/>
 <circle cx="424.3" cy="119.2" r="11.3" fill="url(#rG)"/>
 <path d="M421.5 111 h5.6 v7.5 h4.5 l-7.3 8.5 -7.3-8.5 h4.5z" fill="#fff"/>
 <!-- from v7 -->
 <path d="M465 109 l13 1.5 v22 l-13-1.5z" fill="#dce8f4" stroke="#9ab0c8" stroke-width="0.8"/>
 <g stroke="#8aa8d0" stroke-width="0.6"><path d="M467 113 l9 1 M467 116 l9 1 M467 119 l9 1 M467 122 l9 1 M467 125 l9 1 M467 128 l9 1"/></g>
 <path d="M484.5 114.5 Q484 121 476 121 V117 L471 121 L476 125 V123.2 Q484 123 484.5 114.5z" fill="#2ab032"/>
 <!-- import from document -->
 <path d="M525 107 l14 2 v24 l-14-2z" fill="url(#doc)" stroke="#5a6a78" stroke-width="0.9"/>
 <path d="M526 130 l13 2" stroke="#333" stroke-width="1.2"/>
 <!-- link to document -->
 <path d="M594 107 l14 2 v24 l-14-2z" fill="url(#doc)" stroke="#5a6a78" stroke-width="0.9"/>
 <g fill="none" stroke="#5a6068" stroke-width="3.6"><rect x="605" y="114" width="13" height="7.5" rx="3.75" transform="rotate(-50 611.5 117.8)"/><rect x="593.7" y="125.2" width="13" height="7.5" rx="3.75" transform="rotate(-50 600.2 128.9)"/></g>
 <g fill="none" stroke="#c8ccd0" stroke-width="1.2"><rect x="605" y="114" width="13" height="7.5" rx="3.75" transform="rotate(-50 611.5 117.8)"/><rect x="593.7" y="125.2" width="13" height="7.5" rx="3.75" transform="rotate(-50 600.2 128.9)"/></g>
 <!-- small icons -->
 <defs><radialGradient id="glb" cx="0.35" cy="0.35" r="0.7"><stop offset="0" stop-color="#c8f0ff"/><stop offset="0.5" stop-color="#3a9ad8"/><stop offset="1" stop-color="#1a3a90"/></radialGradient></defs>
 <circle cx="643" cy="111.5" r="6.5" fill="url(#glb)"/><path d="M638 110 q2-4 5-1 q0 3-3 4z M642 115 q3-1 4 2 l-3 1.5z M644 106 q3 0 4 3 l-2 0z" fill="#5ab040"/>
 <rect x="645" y="110" width="6" height="9" fill="#e8e8e8" stroke="#999" stroke-width="0.6"/>
 <g transform="translate(643,133)"><circle r="4.5" fill="#6a88a8"/><g fill="#6a88a8"><rect x="-1.2" y="-6.5" width="2.4" height="13"/><rect x="-1.2" y="-6.5" width="2.4" height="13" transform="rotate(45)"/><rect x="-1.2" y="-6.5" width="2.4" height="13" transform="rotate(90)"/><rect x="-1.2" y="-6.5" width="2.4" height="13" transform="rotate(135)"/></g><circle r="2" fill="#fff"/></g>
 <rect x="645" y="133" width="6" height="9" fill="#e0e0e0" stroke="#999" stroke-width="0.6"/>
 <g fill="none" stroke="#10186a" stroke-width="1.9"><rect x="636.7" y="152" width="9" height="5.4" rx="2.7" transform="rotate(42 641.2 154.7)"/><rect x="642.8" y="158" width="9" height="5.4" rx="2.7" transform="rotate(42 647.3 160.7)"/></g>
 <!-- delete -->
 <circle cx="778.5" cy="119.3" r="14" fill="#f0f0f0" stroke="#555" stroke-width="1.2"/>
 <circle cx="778.5" cy="119.3" r="11.3" fill="url(#rR)"/>
 <rect x="771" y="116.5" width="15" height="5.6" rx="1" fill="#e8e8e8"/>
 <!-- mark as primary -->
 <path d="M813.8 106.5 L829 108.2 V132.5 L813.8 129.5z" fill="#eef5fb" stroke="#b0c4d8" stroke-width="0.8"/>
 <path d="M816.5 113.5 l2.8 3 5-4.5" fill="none" stroke="#3cc040" stroke-width="1.8"/>
 <path d="M824.2 127.5 L832.8 109.5 Q833.5 108.5 834.5 109 L835.6 109.7 Q836.2 110.3 835.8 111 L827 129Z" fill="#2ecb3a" stroke="#1a9a2a" stroke-width="0.5"/>
 <path d="M824.2 127.5 L827 129 L824.5 131z" fill="#c89040"/>
 <!-- right group -->
 <rect x="1241" y="89" width="69" height="130" fill="#c2ced6"/>
 <!-- circuit mapping -->
 <path d="M1145.8 93.3 a10 10 0 0 1 10 10 c0 6.5-6 12-10 22 c-4-10-10-15.5-10-22 a10 10 0 0 1 10-10z" fill="#000"/>
 <circle cx="1145.8" cy="103.2" r="6.3" fill="#fff"/>
 <circle cx="1145.8" cy="103.2" r="3.6" fill="#000"/>
 <g transform="translate(1153.9,116.5)"><circle r="8" fill="#fff"/><g fill="#000"><circle r="5.6"/><rect x="-1.5" y="-8" width="3" height="16" transform="rotate(0)"/><rect x="-1.5" y="-8" width="3" height="16" transform="rotate(45)"/><rect x="-1.5" y="-8" width="3" height="16" transform="rotate(90)"/><rect x="-1.5" y="-8" width="3" height="16" transform="rotate(135)"/></g><circle r="2.6" fill="#fff"/></g>
 <!-- material setup -->
 <g opacity="0.85">
 <g stroke="#c0c0c0" stroke-width="1" fill="none"><path d="M1201 101 v-3 h10 M1208 108 h4 v-9 h5 M1212 108 v9 h5 M1201 113 v4 h8 M1210 118 l10 -4"/></g>
 <rect x="1196" y="100.5" width="11.5" height="13" fill="#5a8ac8" stroke="#3a6aa0" stroke-width="0.7"/>
 <rect x="1198" y="104" width="7" height="3" fill="#a8c8f0"/>
 <rect x="1208.5" y="97" width="6" height="8" fill="#2aa050" stroke="#1a7a3a" stroke-width="0.5"/>
 <rect x="1208.5" y="114.5" width="6" height="8" fill="#2aa050" stroke="#1a7a3a" stroke-width="0.5"/>
 <rect x="1215" y="93" width="5.5" height="6" fill="#d83a4a" stroke="#a02a3a" stroke-width="0.5"/>
 <rect x="1215" y="106" width="5.5" height="6" fill="#d83a4a" stroke="#a02a3a" stroke-width="0.5"/>
 </g>
 <!-- entry exit -->
 <circle cx="1275.2" cy="107.3" r="14" fill="#e8e8e8" stroke="#666" stroke-width="1.2"/>
 <circle cx="1275.2" cy="107.3" r="11.5" fill="url(#rG)"/>
 <path d="M1265 107.3 l5.5-5 v3 h9.4 v-3 l5.5 5 -5.5 5 v-3 h-9.4 v3z" fill="#fff"/>
 <!-- recipes -->
 <path d="M1331 119 L1353 121.5 L1355 120.5 L1333 118z" fill="#d8dde2"/>
 <path d="M1330 93.5 L1352 95.5 V120.5 L1330 118.5Z" fill="#b8dcf4" stroke="#7ab0d8" stroke-width="0.8"/>
 <path d="M1331.8 96 L1350.2 97.6 V118 L1331.8 116.5Z" fill="#f2f8fc"/>
 <g stroke="#a8a8a8" stroke-width="0.9"><path d="M1333.5 102h4 M1334 104h4 M1333.5 106h4.5 M1334 108h3.5 M1333.5 110h4 M1343.5 103h5 M1344 105h4.5 M1343.5 107h5 M1344 109h4 M1343.5 111h5 M1343 113h5"/></g>
 <g stroke="#c8c8c8" stroke-width="0.6"><path d="M1338 99h10 M1341 115h8"/></g>
 <path d="M1309.5 89 V210" stroke="#b0b8c0" stroke-width="1"/>
 <path d="M1241 88.5 H1310" stroke="#b8c0c8" stroke-width="1"/>
</svg>
<div class="t" style="left:359px;top:71px;font-size:12px;color:#222">Document Tools</div>
<div class="t" style="left:463px;top:71px;font-size:12px;color:#333">Visual Aid Tools - AIS- Inspection w/ B</div>
<div class="rb" style="left:366px;top:140px">New</div>
<div class="rb" style="left:400px;top:140px;text-align:center;width:49px">From<br>Template</div>
<div class="rb" style="left:457px;top:140px;text-align:center;width:30px">From<br>V7</div>
<div class="rb" style="left:363px;top:173px">Create Work Instruction</div>
<div class="rb" style="left:500px;top:140px;text-align:center;width:66px">Import From<br>Document</div>
<div class="rb" style="left:574px;top:140px;text-align:center;width:55px">Link To<br>Document</div>
<div class="rb" style="left:655px;top:106px">From Library</div>
<div class="rb" style="left:655px;top:129px">From Any Process</div>
<div class="rb" style="left:655px;top:152px">From URL</div>
<div class="rb" style="left:592px;top:173px">Add Element</div>
<div class="rb" style="left:762px;top:140px">Delete</div>
<div class="rb" style="left:803px;top:140px;text-align:center;width:42px">Mark as<br>Primary</div>
<div class="rb" style="left:771px;top:173px">Edit Element</div>
<div class="rb" style="left:1122px;top:125px;line-height:16px;color:#111">Circuit<br>Mapping</div>
<div class="rb" style="left:1187px;top:125px;line-height:16px;color:#111">Material<br>Setup</div>
<div class="rb" style="left:1247px;top:125px;line-height:16px;color:#111">Entry / Exit</div>
<div class="rb" style="left:1321px;top:125px;line-height:16px;color:#111">Recipes</div>

</body></html>
